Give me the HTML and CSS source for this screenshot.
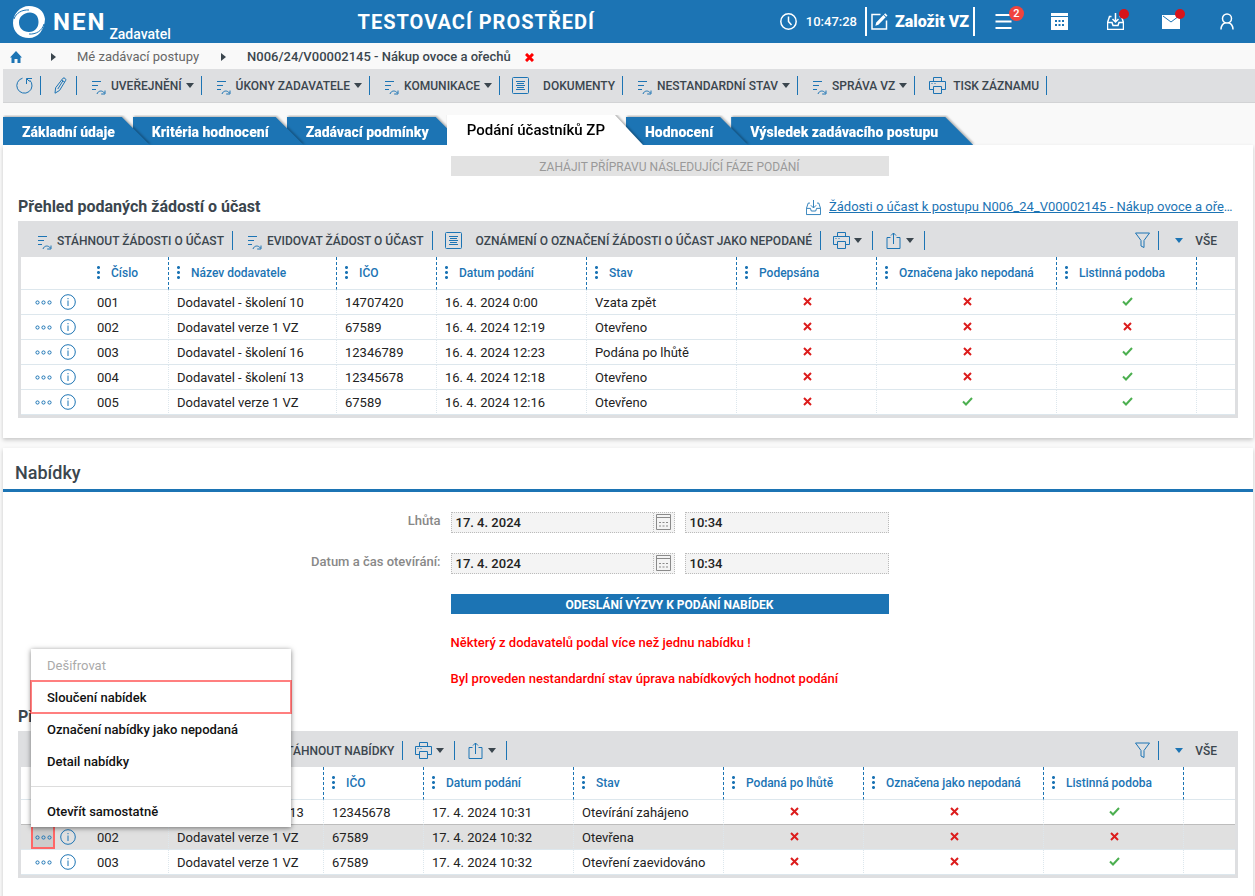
FILE: index.html
```html
<!DOCTYPE html>
<html lang="cs">
<head>
<meta charset="UTF-8">
<meta name="viewport" content="width=device-width, initial-scale=1.0">
<title>NEN - Zadavatel</title>
<link rel="stylesheet" href="styles.css">
</head>
<body>

<!-- icon sprite -->
<svg class="sprite" aria-hidden="true">
  <symbol id="i-reload" viewBox="0 0 17 17"><path d="M6.5 1.2A7.6 7.6 0 1 0 13.6 3M10.5 7V1.5H16M10.8 1.8l2.8 2.8"/></symbol>
  <symbol id="i-pencil" viewBox="0 0 13 17"><path d="M9 1.2c1-.9 3.4.6 2.8 2L5.6 13.4 1 16.2l.6-5.4zM7.8 3.2l2.9 1.8M3.8 12l5-8"/></symbol>
  <symbol id="i-action" viewBox="0 0 14 15"><path d="M0 1.5h9M0 5.5h6M0 9.5h4M5 14c1.2-3.6 5.2-3.9 7.5-1M13 10.5V14H9.2"/></symbol>
  <symbol id="i-doc" viewBox="0 0 17 17"><rect x=".5" y=".5" width="16" height="16" rx="1"/><path d="M4 4.500h9M5 6.500h7M4 8.500h9M5 10.500h7M4 12.500h9"/></symbol>
  <symbol id="i-print" viewBox="0 0 17 17"><path d="M4.500 4.500V.5h8v4M4.500 12.500h-4v-8h16v8h-4M4.500 9.500h8v7h-8z"/><path d="M2.500 6.500h1M5.500 6.500h1"/></symbol>
  <symbol id="i-share" viewBox="0 0 14 17"><path d="M4 5.500H.5v11h13v-11H10M7 12V1M4.500 3.500 7 1l2.500 2.500"/></symbol>
  <symbol id="i-filter" viewBox="0 0 15 17"><path d="M.5 1h14L9 8.500v7l-3-1.500V8.500z"/></symbol>
  <symbol id="i-inbox" viewBox="0 0 17 17"><path d="M4.500 3.500H2.500l-2 6v7h16v-7l-2-6h-2M.5 9.500H5l1 3h5l1-3h4.500M8.500 0v8.500M5.500 6l3 3 3-3"/></symbol>
  <symbol id="i-clock" viewBox="0 0 17 17"><circle cx="8.500" cy="8.500" r="7.700"/><path d="M8.500 3.500v5l3 3.500"/></symbol>
  <symbol id="i-edit" viewBox="0 0 17 17"><path d="M9.500 1.500H1v14.500h14.500V7.500"/><path class="solid" d="M5.200 9.600 12.400 2l2.300 2.300-7.300 7.500-3 .9zM13 1.400 14.200.2l2.300 2.300-1.200 1.200z"/></symbol>
  <symbol id="i-menu" viewBox="0 0 17 17"><path d="M.5 2h16M.5 8.500h16M.5 15h16"/></symbol>
  <symbol id="i-calfull" viewBox="0 0 17 17"><path class="solid" d="M0 0h17v3H0zM0 4h17v13H0z"/><path class="cut" d="M4 8h2M7.500 8h2M11 8h2M4 12h2M7.500 12h2M11 12h2"/></symbol>
  <symbol id="i-mail" viewBox="0 0 18 14"><path class="solid" d="M0 0h18v14H0z"/><path class="fold" d="M1 1l8 6 8-6"/></symbol>
  <symbol id="i-user" viewBox="0 0 14 17"><circle cx="7" cy="5.500" r="4.500"/><path d="M1 16.500c0-4 2-6 4.500-6.800M13 16.500c0-4-2-6-4.500-6.800"/></symbol>
  <symbol id="i-cal" viewBox="0 0 15 16"><path d="M.5.5h14v15H.5zM.5 3.500h14"/><path d="M3 8.500h2M6.500 8.500h2M10 8.500h2M3 12h2M6.500 12h2M10 12h2"/></symbol>
  <symbol id="i-more" viewBox="0 0 17 5"><circle cx="2.500" cy="2.500" r="1.600"/><circle cx="8.500" cy="2.500" r="1.600"/><circle cx="14.500" cy="2.500" r="1.600"/></symbol>
  <symbol id="i-info" viewBox="0 0 16 16"><circle cx="8" cy="8" r="7.300"/><path d="M8 6.500V12M8 4v1.200"/></symbol>
  <symbol id="i-home" viewBox="0 0 12 12"><path class="solid" d="M6 0l6 6.500h-1.500V12h-3V8h-3v4h-3V6.500H0z"/></symbol>
  <symbol id="i-yes" viewBox="0 0 11 9"><path d="M1 4.500l3 3L10 1"/></symbol>
  <symbol id="i-no" viewBox="0 0 9 9"><path d="M1 1l7 7M8 1L1 8"/></symbol>
</svg>

<header class="header">
  <a class="brand" href="#">
    <svg class="logo" viewBox="0 0 32 32" aria-hidden="true">
      <path fill-rule="evenodd" d="M16 0C25 0 31 5 32 13c-.5 11-7 19-16 19C7 32 0 26 0 17 0 8 7 0 16 0zM17 6.500C10 7 6 11 6 16.500 6 22 10 26 16 26c6 0 9.500-4.500 9.500-10C25.500 10 22 6.500 17 6.500z"/>
      <path class="swirl" d="M1 13C3 7 9 3.500 16 4M31 18c-2 7-8 10.500-15 10"/>
    </svg>
    <span class="brand-name">NEN</span>
    <span class="brand-role">Zadavatel</span>
  </a>
  <div class="env">TESTOVACÍ PROSTŘEDÍ</div>
  <div class="clock"><svg class="icon i17"><use href="#i-clock"/></svg>10:47:28</div>
  <button class="create"><svg class="icon i17"><use href="#i-edit"/></svg>Založit VZ</button>
  <nav class="top-icons">
    <button aria-label="Menu"><svg class="icon i17 bold"><use href="#i-menu"/></svg><span class="badge">2</span></button>
    <button aria-label="Kalendář"><svg class="icon i17"><use href="#i-calfull"/></svg></button>
    <button aria-label="Doručené"><svg class="icon i17"><use href="#i-inbox"/></svg><span class="dot"></span></button>
    <button aria-label="Zprávy"><svg class="icon mail"><use href="#i-mail"/></svg><span class="dot"></span></button>
    <button aria-label="Uživatel"><svg class="icon i14"><use href="#i-user"/></svg></button>
  </nav>
</header>

<nav class="breadcrumb">
  <a href="#" aria-label="Domů"><svg class="icon home"><use href="#i-home"/></svg></a>
  <span class="arrow"></span>
  <a href="#">Mé zadávací postupy</a>
  <span class="arrow"></span>
  <strong>N006/24/V00002145 - Nákup ovoce a ořechů</strong>
  <button class="close" aria-label="Zavřít"><svg class="icon no"><use href="#i-no"/></svg></button>
</nav>

<div class="toolbar main-toolbar">
  <button class="first" aria-label="Obnovit"><svg class="icon i17"><use href="#i-reload"/></svg></button>
  <button class="edit" aria-label="Upravit"><svg class="icon i13"><use href="#i-pencil"/></svg></button>
  <button class="act"><svg class="icon action"><use href="#i-action"/></svg>UVEŘEJNĚNÍ<i class="caret"></i></button>
  <button class="act"><svg class="icon action"><use href="#i-action"/></svg>ÚKONY ZADAVATELE<i class="caret"></i></button>
  <button class="act"><svg class="icon action"><use href="#i-action"/></svg>KOMUNIKACE<i class="caret"></i></button>
  <button class="note"><svg class="icon i17"><use href="#i-doc"/></svg>DOKUMENTY</button>
  <button class="act"><svg class="icon action"><use href="#i-action"/></svg>NESTANDARDNÍ STAV<i class="caret"></i></button>
  <button class="act"><svg class="icon action"><use href="#i-action"/></svg>SPRÁVA VZ<i class="caret"></i></button>
  <button class="print"><svg class="icon i17"><use href="#i-print"/></svg>TISK ZÁZNAMU</button>
</div>

<nav class="tabs">
  <a class="tab" href="#"><span>Základní údaje</span></a>
  <a class="tab" href="#"><span>Kritéria hodnocení</span></a>
  <a class="tab" href="#"><span>Zadávací podmínky</span></a>
  <a class="tab active" href="#"><span>Podání účastníků ZP</span></a>
  <a class="tab" href="#"><span>Hodnocení</span></a>
  <a class="tab" href="#"><span>Výsledek zadávacího postupu</span></a>
</nav>

<main>
<section class="panel">
  <div class="form phase">
    <button class="wide" disabled>ZAHÁJIT PŘÍPRAVU NÁSLEDUJÍCÍ FÁZE PODÁNÍ</button>
  </div>

  <div class="list-title">
    <h3>Přehled podaných žádostí o účast</h3>
    <div class="file-link">
      <svg class="icon i15"><use href="#i-inbox"/></svg>
      <span class="file-name"><a href="#">Žádosti o účast k postupu N006_24_V00002145 - Nákup ovoce a ořechů</a></span>
    </div>
  </div>

  <div class="grid">
    <div class="toolbar">
      <button class="act"><svg class="icon action"><use href="#i-action"/></svg>STÁHNOUT ŽÁDOSTI O ÚČAST</button>
      <button class="act"><svg class="icon action"><use href="#i-action"/></svg>EVIDOVAT ŽÁDOST O ÚČAST</button>
      <button class="note"><svg class="icon i17"><use href="#i-doc"/></svg>OZNÁMENÍ O OZNAČENÍ ŽÁDOSTI O ÚČAST JAKO NEPODANÉ</button>
      <button class="tool" aria-label="Tisk"><svg class="icon i17"><use href="#i-print"/></svg><i class="caret"></i></button>
      <button class="tool" aria-label="Export"><svg class="icon i17"><use href="#i-share"/></svg><i class="caret"></i></button>
      <button class="tool filter" aria-label="Filtr"><svg class="icon i15"><use href="#i-filter"/></svg></button>
      <button class="view"><i class="caret"></i>VŠE</button>
    </div>
    <table>
      <colgroup>
        <col class="c-act"><col class="c-no"><col class="c-name"><col class="c-id"><col class="c-date"><col class="c-state"><col class="c-flag"><col class="c-mark"><col class="c-flag"><col>
      </colgroup>
      <thead>
        <tr><th class="act"></th><th>Číslo</th><th>Název dodavatele</th><th>IČO</th><th>Datum podání</th><th>Stav</th><th>Podepsána</th><th>Označena jako nepodaná</th><th>Listinná podoba</th><th class="rest"></th></tr>
      </thead>
      <tbody>
        <tr>
          <td class="act"><div class="row-act"><button class="more" aria-label="Akce"><svg class="icon dots3"><use href="#i-more"/></svg></button><button aria-label="Detail"><svg class="icon i16"><use href="#i-info"/></svg></button></div></td>
          <td>001</td><td>Dodavatel - školení 10</td><td>14707420</td><td>16. 4. 2024 0:00</td><td>Vzata zpět</td>
          <td class="c"><svg class="icon no"><use href="#i-no"/></svg></td><td class="c"><svg class="icon no"><use href="#i-no"/></svg></td><td class="c"><svg class="icon yes"><use href="#i-yes"/></svg></td><td class="rest"></td>
        </tr>
        <tr>
          <td class="act"><div class="row-act"><button class="more" aria-label="Akce"><svg class="icon dots3"><use href="#i-more"/></svg></button><button aria-label="Detail"><svg class="icon i16"><use href="#i-info"/></svg></button></div></td>
          <td>002</td><td>Dodavatel verze 1 VZ</td><td>67589</td><td>16. 4. 2024 12:19</td><td>Otevřeno</td>
          <td class="c"><svg class="icon no"><use href="#i-no"/></svg></td><td class="c"><svg class="icon no"><use href="#i-no"/></svg></td><td class="c"><svg class="icon no"><use href="#i-no"/></svg></td><td class="rest"></td>
        </tr>
        <tr>
          <td class="act"><div class="row-act"><button class="more" aria-label="Akce"><svg class="icon dots3"><use href="#i-more"/></svg></button><button aria-label="Detail"><svg class="icon i16"><use href="#i-info"/></svg></button></div></td>
          <td>003</td><td>Dodavatel - školení 16</td><td>12346789</td><td>16. 4. 2024 12:23</td><td>Podána po lhůtě</td>
          <td class="c"><svg class="icon no"><use href="#i-no"/></svg></td><td class="c"><svg class="icon no"><use href="#i-no"/></svg></td><td class="c"><svg class="icon yes"><use href="#i-yes"/></svg></td><td class="rest"></td>
        </tr>
        <tr>
          <td class="act"><div class="row-act"><button class="more" aria-label="Akce"><svg class="icon dots3"><use href="#i-more"/></svg></button><button aria-label="Detail"><svg class="icon i16"><use href="#i-info"/></svg></button></div></td>
          <td>004</td><td>Dodavatel - školení 13</td><td>12345678</td><td>16. 4. 2024 12:18</td><td>Otevřeno</td>
          <td class="c"><svg class="icon no"><use href="#i-no"/></svg></td><td class="c"><svg class="icon no"><use href="#i-no"/></svg></td><td class="c"><svg class="icon yes"><use href="#i-yes"/></svg></td><td class="rest"></td>
        </tr>
        <tr>
          <td class="act"><div class="row-act"><button class="more" aria-label="Akce"><svg class="icon dots3"><use href="#i-more"/></svg></button><button aria-label="Detail"><svg class="icon i16"><use href="#i-info"/></svg></button></div></td>
          <td>005</td><td>Dodavatel verze 1 VZ</td><td>67589</td><td>16. 4. 2024 12:16</td><td>Otevřeno</td>
          <td class="c"><svg class="icon no"><use href="#i-no"/></svg></td><td class="c"><svg class="icon yes"><use href="#i-yes"/></svg></td><td class="c"><svg class="icon yes"><use href="#i-yes"/></svg></td><td class="rest"></td>
        </tr>
      </tbody>
    </table>
  </div>
</section>

<section class="panel">
  <h2>Nabídky</h2>

  <form class="form">
    <label for="deadline">Lhůta</label>
    <div class="fields">
      <div class="date"><input type="text" id="deadline" value="17. 4. 2024" readonly><button type="button" aria-label="Vybrat datum"><svg class="icon cal"><use href="#i-cal"/></svg></button></div>
      <input class="time" type="text" aria-label="Lhůta - čas" value="10:34" readonly>
    </div>
    <label for="opening">Datum a čas otevírání:</label>
    <div class="fields">
      <div class="date"><input type="text" id="opening" value="17. 4. 2024" readonly><button type="button" aria-label="Vybrat datum"><svg class="icon cal"><use href="#i-cal"/></svg></button></div>
      <input class="time" type="text" aria-label="Otevírání - čas" value="10:34" readonly>
    </div>
    <button type="button" class="wide">ODESLÁNÍ VÝZVY K PODÁNÍ NABÍDEK</button>
    <p class="warning">Některý z dodavatelů podal více než jednu nabídku !</p>
    <p class="warning">Byl proveden nestandardní stav úprava nabídkových hodnot podání</p>
  </form>

  <div class="list-title">
    <h3>Přehled podaných nabídek</h3>
  </div>

  <div class="grid">
    <div class="toolbar offers-toolbar">
      <button class="act"><svg class="icon action"><use href="#i-action"/></svg>STÁHNOUT NABÍDKY</button>
      <button class="tool" aria-label="Tisk"><svg class="icon i17"><use href="#i-print"/></svg><i class="caret"></i></button>
      <button class="tool" aria-label="Export"><svg class="icon i17"><use href="#i-share"/></svg><i class="caret"></i></button>
      <button class="tool filter" aria-label="Filtr"><svg class="icon i15"><use href="#i-filter"/></svg></button>
      <button class="view"><i class="caret"></i>VŠE</button>
    </div>
    <table>
      <colgroup>
        <col class="c-act"><col class="c-no"><col class="c-name-s"><col class="c-id"><col class="c-date"><col class="c-state"><col class="c-flag"><col class="c-mark"><col class="c-flag"><col>
      </colgroup>
      <thead>
        <tr><th class="act"></th><th>Číslo</th><th>Název dodavatele</th><th>IČO</th><th>Datum podání</th><th>Stav</th><th>Podaná po lhůtě</th><th>Označena jako nepodaná</th><th>Listinná podoba</th><th class="rest"></th></tr>
      </thead>
      <tbody>
        <tr>
          <td class="act"><div class="row-act"><button class="more" aria-label="Akce"><svg class="icon dots3"><use href="#i-more"/></svg></button><button aria-label="Detail"><svg class="icon i16"><use href="#i-info"/></svg></button></div></td>
          <td>001</td><td>Dodavatel - školení 13</td><td>12345678</td><td>17. 4. 2024 10:31</td><td>Otevírání zahájeno</td>
          <td class="c"><svg class="icon no"><use href="#i-no"/></svg></td><td class="c"><svg class="icon no"><use href="#i-no"/></svg></td><td class="c"><svg class="icon yes"><use href="#i-yes"/></svg></td><td class="rest"></td>
        </tr>
        <tr class="selected">
          <td class="act">
            <div class="row-act">
              <button class="more open" aria-label="Akce"><svg class="icon dots3"><use href="#i-more"/></svg></button><button aria-label="Detail"><svg class="icon i16"><use href="#i-info"/></svg></button>
              <div class="context-menu">
                <button disabled>Dešifrovat</button>
                <button class="marked">Sloučení nabídek</button>
                <button>Označení nabídky jako nepodaná</button>
                <button>Detail nabídky</button>
                <hr>
                <button>Otevřít samostatně</button>
              </div>
            </div>
          </td>
          <td>002</td><td>Dodavatel verze 1 VZ</td><td>67589</td><td>17. 4. 2024 10:32</td><td>Otevřena</td>
          <td class="c"><svg class="icon no"><use href="#i-no"/></svg></td><td class="c"><svg class="icon no"><use href="#i-no"/></svg></td><td class="c"><svg class="icon no"><use href="#i-no"/></svg></td><td class="rest"></td>
        </tr>
        <tr>
          <td class="act"><div class="row-act"><button class="more" aria-label="Akce"><svg class="icon dots3"><use href="#i-more"/></svg></button><button aria-label="Detail"><svg class="icon i16"><use href="#i-info"/></svg></button></div></td>
          <td>003</td><td>Dodavatel verze 1 VZ</td><td>67589</td><td>17. 4. 2024 10:32</td><td>Otevření zaevidováno</td>
          <td class="c"><svg class="icon no"><use href="#i-no"/></svg></td><td class="c"><svg class="icon no"><use href="#i-no"/></svg></td><td class="c"><svg class="icon yes"><use href="#i-yes"/></svg></td><td class="rest"></td>
        </tr>
      </tbody>
    </table>
  </div>
</section>
</main>

</body>
</html>
```
FILE: styles.css
```css
:root { --blue:#1c74b4; --dark:#3b464e; --bar:#dedfe1; --line:#dde7ed; }
* { box-sizing:border-box; }
body { margin:0; background:#f9f9f9; font-family:Roboto,sans-serif; font-size:13px; line-height:16px; color:#222; }
button { background:none; border:0; padding:0; margin:0; font:inherit; color:inherit; cursor:pointer; }
a { color:inherit; text-decoration:none; }
h2, h3, p { margin:0; }

/* icons */
.sprite { display:none; }
.icon { fill:none; stroke:var(--blue); stroke-width:1; flex:none; display:block; }
.solid { fill:currentColor; stroke:none; }
.cut { stroke:var(--blue); stroke-width:2; }
.fold { stroke:var(--blue); stroke-width:1; }
.i13 { width:13px; height:17px; }
.i14 { width:14px; height:17px; }
.i15 { width:15px; height:17px; }
.i16 { width:16px; height:16px; }
.i17 { width:17px; height:17px; }
.action { width:14px; height:15px; }
.mail { width:18px; height:14px; }
.home { width:12px; height:12px; color:var(--blue); }
.cal { width:15px; height:16px; stroke:#8a8a8a; }
.dots3 { width:17px; height:5px; }
.yes { width:11px; height:9px; stroke:#4caf50; stroke-width:2; }
.no { width:9px; height:9px; stroke:#dc1c1c; stroke-width:2; }
.caret { border:4px solid transparent; border-top:5px solid var(--dark); border-bottom:0; margin-left:4px; }

/* header */
.header { display:flex; align-items:center; height:43px; background:var(--blue); color:#fff; }
.header .icon { stroke:#fff; stroke-width:1.5; }
.header .bold { stroke-width:2; }
.brand { display:flex; align-items:center; flex:1; padding-left:13px; }
.logo { width:32px; height:32px; fill:#fff; margin-right:8px; }
.swirl { fill:none; stroke:var(--blue); stroke-width:1; }
.brand-name { font-size:24px; font-weight:700; letter-spacing:2px; margin-right:3px; }
.brand-role { font-size:14px; font-weight:500; padding-top:25px; }
.env { font-size:20px; font-weight:700; letter-spacing:1px; margin-right:185px; }
.clock { display:flex; align-items:center; gap:9px; font-weight:500; margin-right:8px; }
.create { display:flex; align-items:center; gap:7px; height:29px; padding:0 4px; border:solid #fff; border-width:0 2px; font-size:16px; font-weight:900; }
.top-icons { display:flex; }
.top-icons button { position:relative; width:56px; height:43px; display:flex; align-items:center; justify-content:center; }
.badge { position:absolute; top:6px; right:7px; width:15px; height:15px; border-radius:50%; background:#f0443e; font-size:11px; font-weight:500; line-height:15px; }
.dot { position:absolute; top:9px; right:14px; width:10px; height:10px; border-radius:50%; background:#d8141a; }

/* breadcrumb */
.breadcrumb { display:flex; align-items:center; height:26px; padding:2px 0 0 10px; color:#666; }
.breadcrumb strong { font-weight:500; color:var(--dark); }
.breadcrumb .arrow { border:4px solid transparent; border-left:5px solid var(--dark); border-right:0; margin:0 21px 0 22px; }
.breadcrumb a:first-child + .arrow { margin-left:29px; }
.breadcrumb .close { margin-left:14px; }
.breadcrumb .no { stroke:#f00; stroke-width:3; }

/* toolbars */
.toolbar { display:flex; align-items:center; background:var(--bar); color:var(--dark); font-size:12px; font-weight:500; }
.toolbar button { display:flex; align-items:center; height:19px; border-right:1px solid var(--blue); padding-right:7px; white-space:nowrap; }
.main-toolbar { height:34px; margin-left:3px; border-bottom:1px solid #d2d3d5; }
.toolbar .first { padding-left:13px; }
.toolbar .edit { padding:0 9px 0 13px; }
.toolbar .act { padding-left:15px; }
.toolbar .action { margin:4px 5px 0 0; }
.toolbar .note { padding-left:12px; }
.toolbar .note .icon { margin-right:14px; }
.toolbar .print { padding-left:14px; }
.toolbar .print .icon { margin-right:7px; }
.toolbar .tool { padding:0 10px 0 12px; }
.toolbar .filter { margin-left:auto; padding:0 8px 0 0; }
.toolbar .view { border:0; padding:0 18px 0 16px; }
.view .caret { border-top-color:var(--blue); margin:0 12px 0 0; }

/* tabs */
.tabs { display:flex; align-items:flex-end; margin:12px 0 0 3px; height:30px; overflow:hidden; }
.tab { position:relative; height:28px; line-height:31px; padding:0 35px 0 19px; margin-right:-17px; color:#fff; font-size:14px; font-weight:900; filter:drop-shadow(1px -1px 1px rgba(0,0,0,.3)); white-space:nowrap; }
.tab::before { content:""; position:absolute; inset:0; background:var(--blue); clip-path:polygon(0 0,calc(100% - 28px) 0,100% 100%,0 100%); }
.tab span { position:relative; }
.tab:nth-child(1) { z-index:6; }
.tab:nth-child(2) { z-index:5; }
.tab:nth-child(3) { z-index:4; }
.tab:nth-child(5) { z-index:3; }
.tab:nth-child(6) { z-index:2; }
.tab.active { z-index:7; height:30px; padding:0 38px 0 20px; color:#000; font-size:15px; font-weight:500; }
.tab.active::before { background:#fff; }

/* panels */
.panel { background:#fff; margin:0 2px 10px 3px; padding-bottom:20px; box-shadow:0 2px 4px rgba(0,0,0,.2); }
.panel:last-child { margin-bottom:0; }
.panel h2 { font-size:18px; line-height:24px; font-weight:500; color:var(--dark); padding:13px 12px 4px; border-bottom:3px solid var(--blue); }
.form { display:grid; grid-template-columns:35% 438px; column-gap:10px; row-gap:20px; padding-top:20px; }
.form label { text-align:right; color:#888; font-weight:500; padding-top:1px; }
.fields { display:flex; gap:10px; }
.date { display:flex; width:224px; border:1px dotted #bbb; background:#f4f4f4; }
.date input { flex:1; min-width:0; border:0; }
.date button { border-left:1px dotted #bbb; padding:0 3px 1px 2px; }
.form input { height:19px; padding:0 4px; background:#f4f4f4; font:500 13px Roboto,sans-serif; color:#222; }
.form .time { width:204px; height:21px; border:1px dotted #bbb; }
.wide { grid-column:2; height:20px; background:var(--blue); color:#fff; font-size:12px; font-weight:700; }
.form .wide { margin-bottom:1px; padding-top:1px; }
.wide:disabled { background:#e2e2e2; color:#999; font-weight:400; }
.phase { padding-top:11px; }
.warning { grid-column:2; color:#f00; font-weight:500; }

/* lists */
.list-title { display:flex; justify-content:space-between; align-items:center; padding:20px 15px 4px; }
.list-title h3 { font-size:16px; line-height:20px; font-weight:700; color:var(--dark); }
.file-link { display:flex; align-items:center; gap:8px; color:var(--blue); }
.file-name { width:409px; overflow:hidden; text-overflow:ellipsis; white-space:nowrap; }
.file-name a { text-decoration:underline; }
.grid { margin:0 15px; border:3px solid var(--bar); border-top:0; }
.grid .toolbar { height:36px; padding-top:3px; }
.grid .toolbar .act { padding-right:8px; }
.grid .toolbar .act:first-child { padding-left:17px; }
.grid .toolbar .note { padding-right:8px; }
.offers-toolbar { padding-left:222px; }
table { width:100%; table-layout:fixed; border-spacing:0; }
.c-act { width:68px; }
.c-no { width:80px; }
.c-name { width:168px; }
.c-name-s { width:155px; }
.c-id { width:100px; }
.c-date, .c-state { width:150px; }
.c-flag { width:140px; }
.c-mark { width:180px; }
th { height:33px; padding:0 8px; text-align:left; font-size:12px; font-weight:500; color:var(--blue); border-right:1px dashed var(--blue); border-bottom:1px solid var(--line); white-space:nowrap; }
th::before { content:""; display:inline-block; vertical-align:middle; width:3px; height:15px; margin:-2px 11px 0 0; background:radial-gradient(circle,var(--blue) 1px,transparent 2px) 0 0/3px 5px; }
th.act::before, th.rest::before { display:none; }
td { height:25px; padding:2px 8px 0; border-right:1px dotted var(--line); border-bottom:1px solid var(--line); white-space:nowrap; }
th.act, td.act { border-right:0; padding:0; }
th.rest, td.rest { border-right:0; }
td.c { padding:0 7px 2px 9px; }
td.c .icon { margin:0 auto; }
.row-act { position:relative; display:flex; align-items:center; margin-left:10px; height:24px; }
.row-act .more { width:24px; height:24px; display:flex; align-items:center; padding-left:4px; margin-right:5px; }
.selected td { background:#e0e0e0; }
tr:has(+ .selected) td { border-bottom-color:#bdbdbd; }
.row-act .open { background:#ccc; border:2px solid #f66; padding-left:2px; }

/* row menu */
.context-menu { position:absolute; z-index:10; left:0; bottom:22px; width:260px; background:#fff; box-shadow:0 1px 5px rgba(0,0,0,.5); }
.context-menu button { display:block; width:100%; height:32px; padding:2px 16px 0; text-align:left; font-weight:500; color:#111; }
.context-menu button:disabled { color:#aaa; font-weight:400; }
.context-menu .marked { outline:2px solid rgba(255,0,0,.5); outline-offset:-1px; }
.context-menu hr { border:0; border-top:1px solid #ddd; margin:9px 0 8px; }
```
